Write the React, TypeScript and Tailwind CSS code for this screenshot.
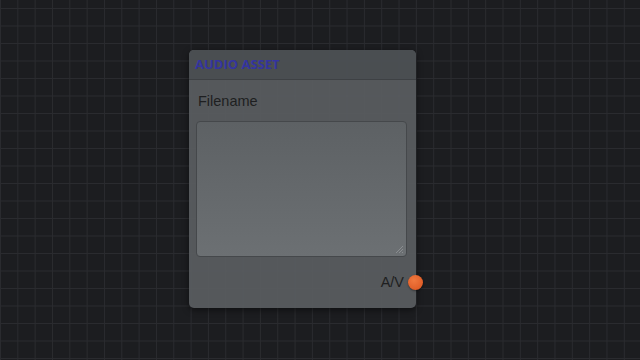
export default function App() {
  return (
    <div
      className="w-[640px] h-[360px] bg-[#1c1d20] relative overflow-hidden"
      style={{
        backgroundImage:
          "linear-gradient(to right, #2a2b2f 1px, transparent 1px), linear-gradient(to bottom, #2a2b2f 1px, transparent 1px)",
        backgroundSize: "17.33px 17.5px",
        backgroundPosition: "0px 8px",
      }}
    >
      <div className="absolute left-[189px] top-[50px] w-[227px] h-[258px] rounded-[5px] bg-[#585c5f]/95 shadow-[0_2px_6px_rgba(0,0,0,0.5)] flex flex-col">
        <div className="h-[30px] bg-[#4a4e51]/95 rounded-t-[5px] border-b border-[#3e4144] flex items-center px-[6px]">
          <span className="text-[13px] font-bold text-[#3434a0]" style={{ fontFamily: '"Open Sans", sans-serif' }}>
            AUDIO ASSET
          </span>
        </div>
        <div className="flex-1 flex flex-col pl-[7px] pr-[9px] pt-[13px]" style={{ fontFamily: '"Liberation Sans", Arial, sans-serif' }}>
          <div className="text-[14.5px] text-[#1e1f21] pl-[2px] leading-[16px]">Filename</div>
          <div className="mt-[12px] h-[136px] rounded-[4px] border border-[#45484b] bg-gradient-to-b from-[#5d6164] to-[#6c7073] relative">
            <svg className="absolute right-[2px] bottom-[2px]" width="10" height="10" viewBox="0 0 10 10">
              <line x1="9" y1="2" x2="2" y2="9" stroke="#8a8d90" strokeWidth="1" />
              <line x1="9" y1="5" x2="5" y2="9" stroke="#8a8d90" strokeWidth="1" />
              <line x1="9" y1="8" x2="8" y2="9" stroke="#8a8d90" strokeWidth="1" />
            </svg>
          </div>
          <div className="flex justify-end items-center mt-[17px] pr-[3px]">
            <span className="text-[14.5px] text-[#1e1f21] leading-[16px]">A/V</span>
          </div>
        </div>
        <div className="absolute right-[-7px] top-[225px] w-[15px] h-[15px] rounded-full bg-[#e4602a] shadow-[0_1px_2px_rgba(0,0,0,0.4)]" style={{ backgroundImage: "radial-gradient(circle at 40% 35%, #f0783e, #d9531f)" }} />
      </div>
    </div>
  );
}
